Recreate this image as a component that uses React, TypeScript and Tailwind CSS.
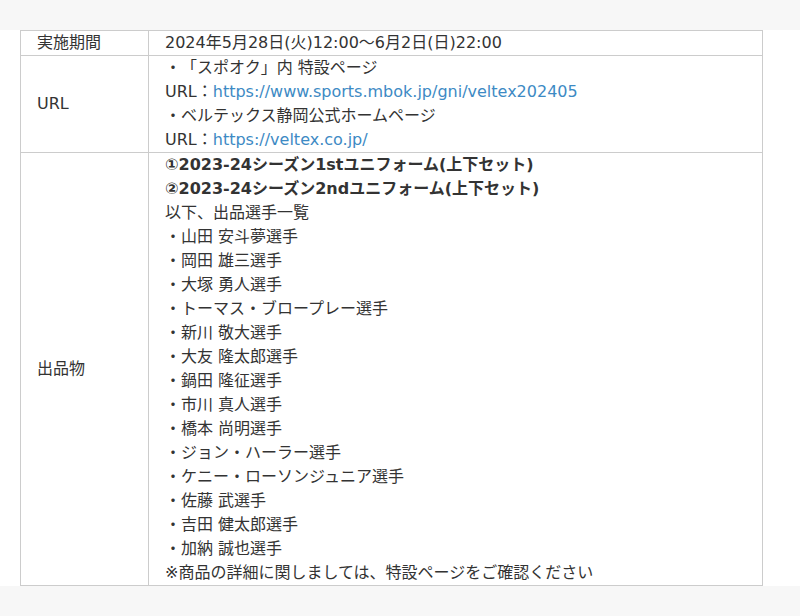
import React from 'react';

const players = [
  '山田 安斗夢選手',
  '岡田 雄三選手',
  '大塚 勇人選手',
  'トーマス・ブロープレー選手',
  '新川 敬大選手',
  '大友 隆太郎選手',
  '鍋田 隆征選手',
  '市川 真人選手',
  '橋本 尚明選手',
  'ジョン・ハーラー選手',
  'ケニー・ローソンジュニア選手',
  '佐藤 武選手',
  '吉田 健太郎選手',
  '加納 誠也選手',
];

const Link: React.FC<{ href: string }> = ({ href }) => (
  <a href={href} className="text-[#3d8ac4]">
    {href}
  </a>
);

export default function App() {
  return (
    <div
      className="min-h-screen bg-[#f7f7f7] pt-[30px] text-[16px] leading-[24px] text-[#333] [text-spacing-trim:space-all]"
      style={{ fontFamily: '"DejaVu Sans", "Noto Sans CJK JP", sans-serif' }}
    >
      <div className="bg-white pl-[20px]">
        <table className="w-[743px] border-collapse">
          <tbody>
            <tr>
              <th className="w-[128px] border border-[#ccc] px-[16px] text-left align-middle font-normal">実施期間</th>
              <td className="border border-[#ccc] px-[16px]">2024年5月28日(火)12:00〜6月2日(日)22:00</td>
            </tr>
            <tr>
              <th className="border border-[#ccc] px-[16px] text-left align-middle font-normal">URL</th>
              <td className="border border-[#ccc] px-[16px]">
                <div>・「スポオク」内 特設ページ</div>
                <div>
                  URL：<Link href="https://www.sports.mbok.jp/gni/veltex202405" />
                </div>
                <div>・ベルテックス静岡公式ホームページ</div>
                <div>
                  URL：<Link href="https://veltex.co.jp/" />
                </div>
              </td>
            </tr>
            <tr>
              <th className="border border-[#ccc] px-[16px] text-left align-middle font-normal">出品物</th>
              <td className="border border-[#ccc] px-[16px]">
                <div className="font-bold">①2023-24シーズン1stユニフォーム(上下セット)</div>
                <div className="font-bold">②2023-24シーズン2ndユニフォーム(上下セット)</div>
                <div>以下、出品選手一覧</div>
                {players.map((p) => (
                  <div key={p}>・{p}</div>
                ))}
                <div>※商品の詳細に関しましては、特設ページをご確認ください</div>
              </td>
            </tr>
          </tbody>
        </table>
      </div>
    </div>
  );
}
